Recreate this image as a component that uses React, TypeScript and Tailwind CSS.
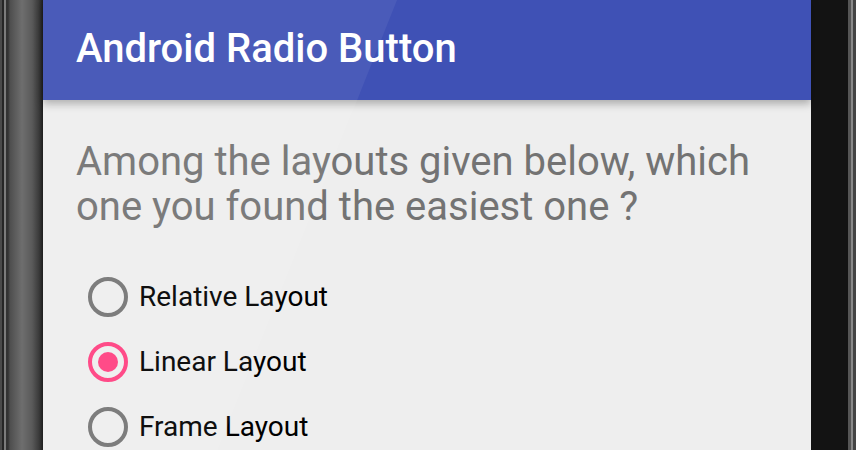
import { useState } from 'react'

export default function App() {
  const [selected, setSelected] = useState(1)

  const options = ['Relative Layout', 'Linear Layout', 'Frame Layout']

  return (
    <div className="flex h-[450px] w-[856px] overflow-hidden bg-black font-['Roboto',sans-serif]">
      {/* left bezel */}
      <div className="w-[43px] shrink-0 bg-[linear-gradient(to_right,#4a4a4a_0px,#4a4a4a_2px,#262626_2px,#262626_4px,#7c7c7c_4px,#7c7c7c_6px,#333_6px,#333_8px,#4e4e4e_10px,#6e6e6e_22px,#5a5a5a_32px,#3a3a3a_39px,#1e1e1e_43px)]" />

      {/* screen */}
      <div className="relative flex flex-1 flex-col bg-[#eeeeee]">
        <div className="relative z-10 flex h-[100px] shrink-0 items-center bg-[#3f51b5] pl-[33px] shadow-[0_4px_8px_rgba(0,0,0,0.28)]">
          <h1 className="pb-[2px] text-[40px] font-medium leading-none text-white">Android Radio Button</h1>
        </div>

        <div className="px-[33px] pt-[39px]">
          <p className="text-[40px] leading-[45px] text-[#737373]">
            Among the layouts given below, which one you found the easiest one ?
          </p>

          <div className="mt-[35px] flex flex-col">
            {options.map((label, i) => (
              <button
                key={label}
                onClick={() => setSelected(i)}
                className="flex h-[65px] items-center gap-[11px] pl-[12px] text-left"
              >
                {selected === i ? (
                  <span className="flex h-[40px] w-[40px] items-center justify-center rounded-full border-4 border-[#ff4081]">
                    <span className="h-[20px] w-[20px] rounded-full bg-[#ff4081]" />
                  </span>
                ) : (
                  <span className="h-[40px] w-[40px] rounded-full border-4 border-[#757575]" />
                )}
                <span className="text-[28px] text-black">{label}</span>
              </button>
            ))}
          </div>
        </div>

        {/* screen glare */}
        <div className="pointer-events-none absolute inset-0 z-20 bg-white/[0.06] [clip-path:polygon(0_0,354px_0,175px_450px,0_450px)]" />
      </div>

      {/* right bezel */}
      <div className="flex w-[45px] shrink-0">
        <div className="w-[37px] bg-[#131313]" />
        <div className="w-[3px] bg-[#555]" />
        <div className="w-[2px] bg-[#8a8a8a]" />
        <div className="w-[3px] bg-[#444]" />
      </div>
    </div>
  )
}
